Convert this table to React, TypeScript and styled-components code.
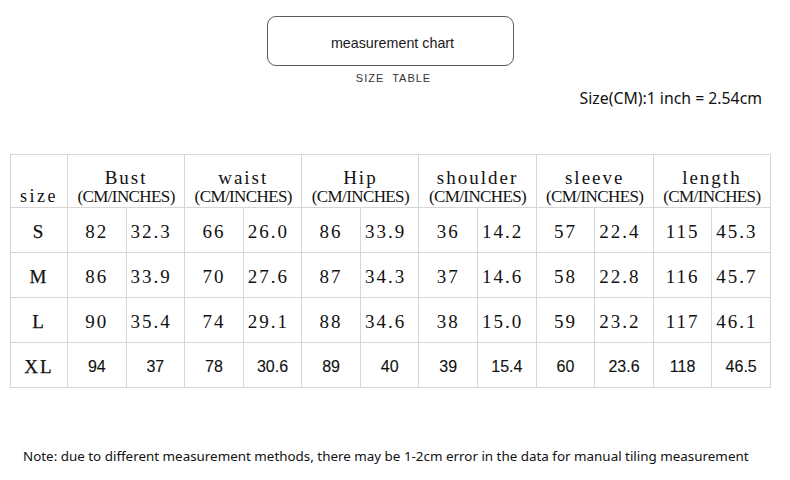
import React from "react";
import styled, { createGlobalStyle } from "styled-components";

const GlobalStyle = createGlobalStyle`
  html, body {
    margin: 0;
    padding: 0;
    background: #ffffff;
  }
  body {
    width: 790px;
    height: 480px;
    overflow: hidden;
    font-family: "Liberation Sans", Arial, sans-serif;
    color: #111;
  }
`;

const serif = `"Liberation Serif", "Times New Roman", serif`;

const Page = styled.div`
  display: flex;
  flex-direction: column;
  padding-top: 16px;
`;

const TitleBlock = styled.div`
  display: flex;
  flex-direction: column;
  align-items: center;
  padding-right: 9px;
`;

const TitleBox = styled.div`
  box-sizing: border-box;
  width: 247px;
  height: 50px;
  border: 1.5px solid #5c5c5c;
  border-radius: 9px;
  display: flex;
  align-items: center;
  justify-content: center;
  font-size: 14.3px;
  color: #1a1a1a;
  padding: 3px 0 0 4px;
`;

const Caption = styled.div`
  margin-top: 6px;
  padding-left: 6px;
  font-size: 11px;
  line-height: 13px;
  letter-spacing: 1px;
  white-space: pre;
  color: #333;
`;

const Conversion = styled.div`
  align-self: flex-end;
  margin-top: 4px;
  padding-right: 28px;
  font-family: "Noto Sans", sans-serif;
  font-size: 15.8px;
  line-height: 19px;
  color: #111;
`;

const Table = styled.table`
  margin: 46px 0 0 10px;
  width: 761px;
  border-collapse: collapse;
  table-layout: fixed;
  border: 1px solid #d6d6d6;
  color: #111;
`;

const HeadRow = styled.tr`
  height: 53px;
`;

const BodyRow = styled.tr`
  height: 45px;
`;

const HeadCell = styled.th`
  border: 1px solid #d6d6d6;
  font-family: ${serif};
  font-weight: normal;
  vertical-align: bottom;
  padding: 0 0 1px;
  text-align: center;
`;

const Word = styled.div<{ $tight?: boolean }>`
  font-size: ${(p) => (p.$tight ? "18px" : "19px")};
  line-height: 19px;
  letter-spacing: ${(p) => (p.$tight ? "2.5px" : "2px")};
`;

const Units = styled.div`
  font-size: 17px;
  line-height: 19px;
  letter-spacing: -0.6px;
  white-space: nowrap;
`;

const Cell = styled.td<{ $left?: boolean; $sans?: boolean; $label?: boolean }>`
  border: 1px solid #d6d6d6;
  padding: 4px 0 0 ${(p) => (p.$left ? "4px" : "0")};
  text-align: ${(p) => (p.$left ? "left" : "center")};
  font-family: ${(p) => (p.$sans ? `"Liberation Sans", Arial, sans-serif` : serif)};
  font-size: ${(p) => (p.$sans ? "16px" : "19px")};
  letter-spacing: ${(p) => (p.$sans ? "0" : "2px")};
  -webkit-text-stroke: ${(p) => (p.$label ? "0.25px #111" : p.$sans ? "0.12px #111" : "0")};
  white-space: nowrap;
`;

const Note = styled.div`
  margin-top: 58px;
  padding-left: 23px;
  font-family: "Noto Sans", sans-serif;
  font-size: 13.4px;
  line-height: 20px;
  color: #111;
`;

const measures = ["Bust", "waist", "Hip", "shoulder", "sleeve", "length"];

type Row = { size: string; values: string[]; sans?: boolean };

const rows: Row[] = [
  { size: "S", values: ["82", "32.3", "66", "26.0", "86", "33.9", "36", "14.2", "57", "22.4", "115", "45.3"] },
  { size: "M", values: ["86", "33.9", "70", "27.6", "87", "34.3", "37", "14.6", "58", "22.8", "116", "45.7"] },
  { size: "L", values: ["90", "35.4", "74", "29.1", "88", "34.6", "38", "15.0", "59", "23.2", "117", "46.1"] },
  { size: "XL", values: ["94", "37", "78", "30.6", "89", "40", "39", "15.4", "60", "23.6", "118", "46.5"], sans: true },
];

export default function App() {
  return (
    <Page>
      <GlobalStyle />
      <TitleBlock>
        <TitleBox>measurement chart</TitleBox>
        <Caption>{"SIZE  TABLE"}</Caption>
      </TitleBlock>
      <Conversion>Size(CM):1 inch = 2.54cm</Conversion>
      <Table>
        <colgroup>
          <col style={{ width: 57 }} />
          {Array.from({ length: 12 }).map((_, i) => (
            <col key={i} />
          ))}
        </colgroup>
        <thead>
          <HeadRow>
            <HeadCell>
              <Word $tight>size</Word>
            </HeadCell>
            {measures.map((m) => (
              <HeadCell key={m} colSpan={2}>
                <Word>{m}</Word>
                <Units>(CM/INCHES)</Units>
              </HeadCell>
            ))}
          </HeadRow>
        </thead>
        <tbody>
          {rows.map((r) => (
            <BodyRow key={r.size}>
              <Cell $label>{r.size}</Cell>
              {r.values.map((v, i) => (
                <Cell key={i} $sans={r.sans} $left={!r.sans && i % 2 === 1}>
                  {v}
                </Cell>
              ))}
            </BodyRow>
          ))}
        </tbody>
      </Table>
      <Note>
        Note: due to different measurement methods, there may be 1-2cm error in the data for manual tiling measurement
      </Note>
    </Page>
  );
}
